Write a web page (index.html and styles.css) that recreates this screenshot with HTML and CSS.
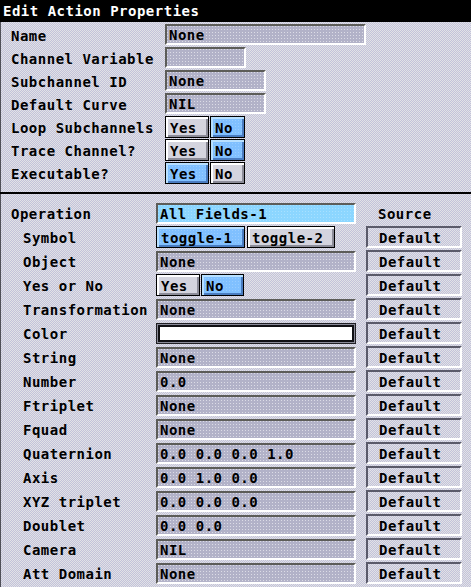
FILE: index.html
```html
<!DOCTYPE html>
<html>
<head>
<meta charset="utf-8">
<link rel="stylesheet" href="styles.css">
</head>
<body>
<div class="window">
  <div class="titlebar">Edit Action Properties</div>
  <div class="top">
    <div class="row"><span class="label">Name</span><span class="field w200">None</span></div>
    <div class="row"><span class="label">Channel Variable</span><span class="field w80"></span></div>
    <div class="row"><span class="label">Subchannel ID</span><span class="field w100">None</span></div>
    <div class="row"><span class="label">Default Curve</span><span class="field w100">NIL</span></div>
    <div class="row"><span class="label">Loop Subchannels</span><span class="btns"><span class="btn yes">Yes</span><span class="btn no on">No</span></span></div>
    <div class="row"><span class="label">Trace Channel?</span><span class="btns"><span class="btn yes">Yes</span><span class="btn no on">No</span></span></div>
    <div class="row"><span class="label">Executable?</span><span class="btns"><span class="btn yes on">Yes</span><span class="btn no">No</span></span></div>
  </div>
  <div class="sep"></div>
  <div class="bottom">
    <div class="brow"><span class="blabel">Operation</span><span class="field wide op">All Fields-1</span><span class="source-h">Source</span></div>
    <div class="brow"><span class="blabel ind">Symbol</span><span class="btns wide"><span class="btn t1 on">toggle-1</span><span class="btn t2">toggle-2</span></span><span class="dflt">Default</span></div>
    <div class="brow"><span class="blabel ind">Object</span><span class="field wide">None</span><span class="dflt">Default</span></div>
    <div class="brow"><span class="blabel ind">Yes or No</span><span class="btns wide"><span class="btn byes">Yes</span><span class="btn bno on">No</span></span><span class="dflt">Default</span></div>
    <div class="brow"><span class="blabel ind">Transformation</span><span class="field wide">None</span><span class="dflt">Default</span></div>
    <div class="brow"><span class="blabel ind">Color</span><span class="color wide"></span><span class="dflt">Default</span></div>
    <div class="brow"><span class="blabel ind">String</span><span class="field wide">None</span><span class="dflt">Default</span></div>
    <div class="brow"><span class="blabel ind">Number</span><span class="field wide">0.0</span><span class="dflt">Default</span></div>
    <div class="brow"><span class="blabel ind">Ftriplet</span><span class="field wide">None</span><span class="dflt">Default</span></div>
    <div class="brow"><span class="blabel ind">Fquad</span><span class="field wide">None</span><span class="dflt">Default</span></div>
    <div class="brow"><span class="blabel ind">Quaternion</span><span class="field wide">0.0 0.0 0.0 1.0</span><span class="dflt">Default</span></div>
    <div class="brow"><span class="blabel ind">Axis</span><span class="field wide">0.0 1.0 0.0</span><span class="dflt">Default</span></div>
    <div class="brow"><span class="blabel ind">XYZ triplet</span><span class="field wide">0.0 0.0 0.0</span><span class="dflt">Default</span></div>
    <div class="brow"><span class="blabel ind">Doublet</span><span class="field wide">0.0 0.0</span><span class="dflt">Default</span></div>
    <div class="brow"><span class="blabel ind">Camera</span><span class="field wide">NIL</span><span class="dflt">Default</span></div>
    <div class="brow"><span class="blabel ind">Att Domain</span><span class="field wide">None</span><span class="dflt">Default</span></div>
  </div>
</div>
</body>
</html>
```
FILE: styles.css
```css
html, body {
  margin: 0;
  padding: 0;
}
body {
  width: 471px;
  height: 587px;
  overflow: hidden;
  font-family: "DejaVu Sans Mono", "Liberation Mono", monospace;
  font-weight: bold;
  font-size: 14px;
  letter-spacing: 0.5px;
  color: #000;
  background-color: #d0d0de;
  background-image: repeating-conic-gradient(#c2c2da 0 25%, #e2e2e6 0 50%);
  background-size: 2px 2px;
}
.window {
  height: 587px;
  border-left: 1px solid #505058;
  box-sizing: border-box;
}
.titlebar {
  height: 22px;
  background: #000;
  color: #fff;
  line-height: 22px;
  padding-left: 3px;
  margin-left: -1px;
  white-space: nowrap;
}
.top {
  padding: 1px 0 8px 10px;
}
.row {
  display: flex;
  align-items: center;
  height: 23px;
}
.label {
  width: 154px;
  flex: none;
  white-space: nowrap;
  padding-top: 2px;
}
.field {
  box-sizing: border-box;
  height: 21px;
  line-height: 19px;
  padding-left: 2px;
  border-top: 2px solid #5c5c58;
  border-left: 2px solid #5c5c58;
  border-bottom: 2px solid #fff;
  border-right: 2px solid #fff;
  background-color: #b2b2c8;
  background-image: conic-gradient(from 270deg at 1px 1px, #dcdce6 90deg, transparent 0);
  background-size: 3px 3px;
  white-space: nowrap;
  overflow: hidden;
  flex: none;
}
.w200 { width: 201px; }
.w80 { width: 81px; }
.w100 { width: 101px; }
.btns {
  display: flex;
  gap: 1px;
  flex: none;
}
.btn {
  box-sizing: border-box;
  height: 22px;
  line-height: 22px;
  overflow: hidden;
  border: 1px solid #000;
  padding-left: 4px;
  background-color: #d4d4de;
  box-shadow: inset 2px 2px 0 #fff, inset -2px -2px 0 #8c8c98;
  white-space: nowrap;
}
.btn.on {
  background-color: #80c0ff;
  background-image: conic-gradient(from 270deg at 1px 1px, #98ccff 90deg, transparent 0);
  background-size: 3px 3px;
  box-shadow: inset 2px 2px 0 #b8e0ff, inset -2px -2px 0 #4a7cc0;
}
.yes { width: 44px; }
.no { width: 35px; }
.byes { width: 44px; }
.bno { width: 43px; }
.t1 { width: 89px; }
.t2 { width: 88px; margin-left: 1px; }
.sep {
  height: 2px;
  background: #000;
  margin-left: -1px;
}
.bottom {
  padding: 7px 0 0 10px;
}
.brow {
  display: flex;
  align-items: center;
  height: 24px;
}
.blabel {
  width: 145px;
  flex: none;
  white-space: nowrap;
  padding-top: 2px;
  box-sizing: border-box;
}
.blabel.ind {
  padding-left: 12px;
}
.wide {
  width: 200px;
  flex: none;
}
.field.op {
  background-color: #8cd6ff;
  background-image: conic-gradient(from 270deg at 1px 1px, #a8e0ff 90deg, transparent 0);
  border-bottom-color: #fff;
}
.color {
  box-sizing: border-box;
  height: 21px;
  border: 1px solid #202024;
  background: #fff;
  box-shadow: inset 0 0 0 1px #8a8a98, inset 0 0 0 3px #101014;
}
.source-h {
  margin-left: 10px;
  padding-left: 12px;
  padding-top: 2px;
  width: 95px;
  box-sizing: border-box;
}
.dflt {
  margin-left: 10px;
  width: 96px;
  height: 22px;
  box-sizing: border-box;
  line-height: 20px;
  overflow: hidden;
  padding-left: 11px;
  border-top: 2px solid #5a5a6a;
  border-left: 2px solid #5a5a6a;
  border-bottom: 2px solid #fff;
  border-right: 2px solid #fff;
  flex: none;
}
```
